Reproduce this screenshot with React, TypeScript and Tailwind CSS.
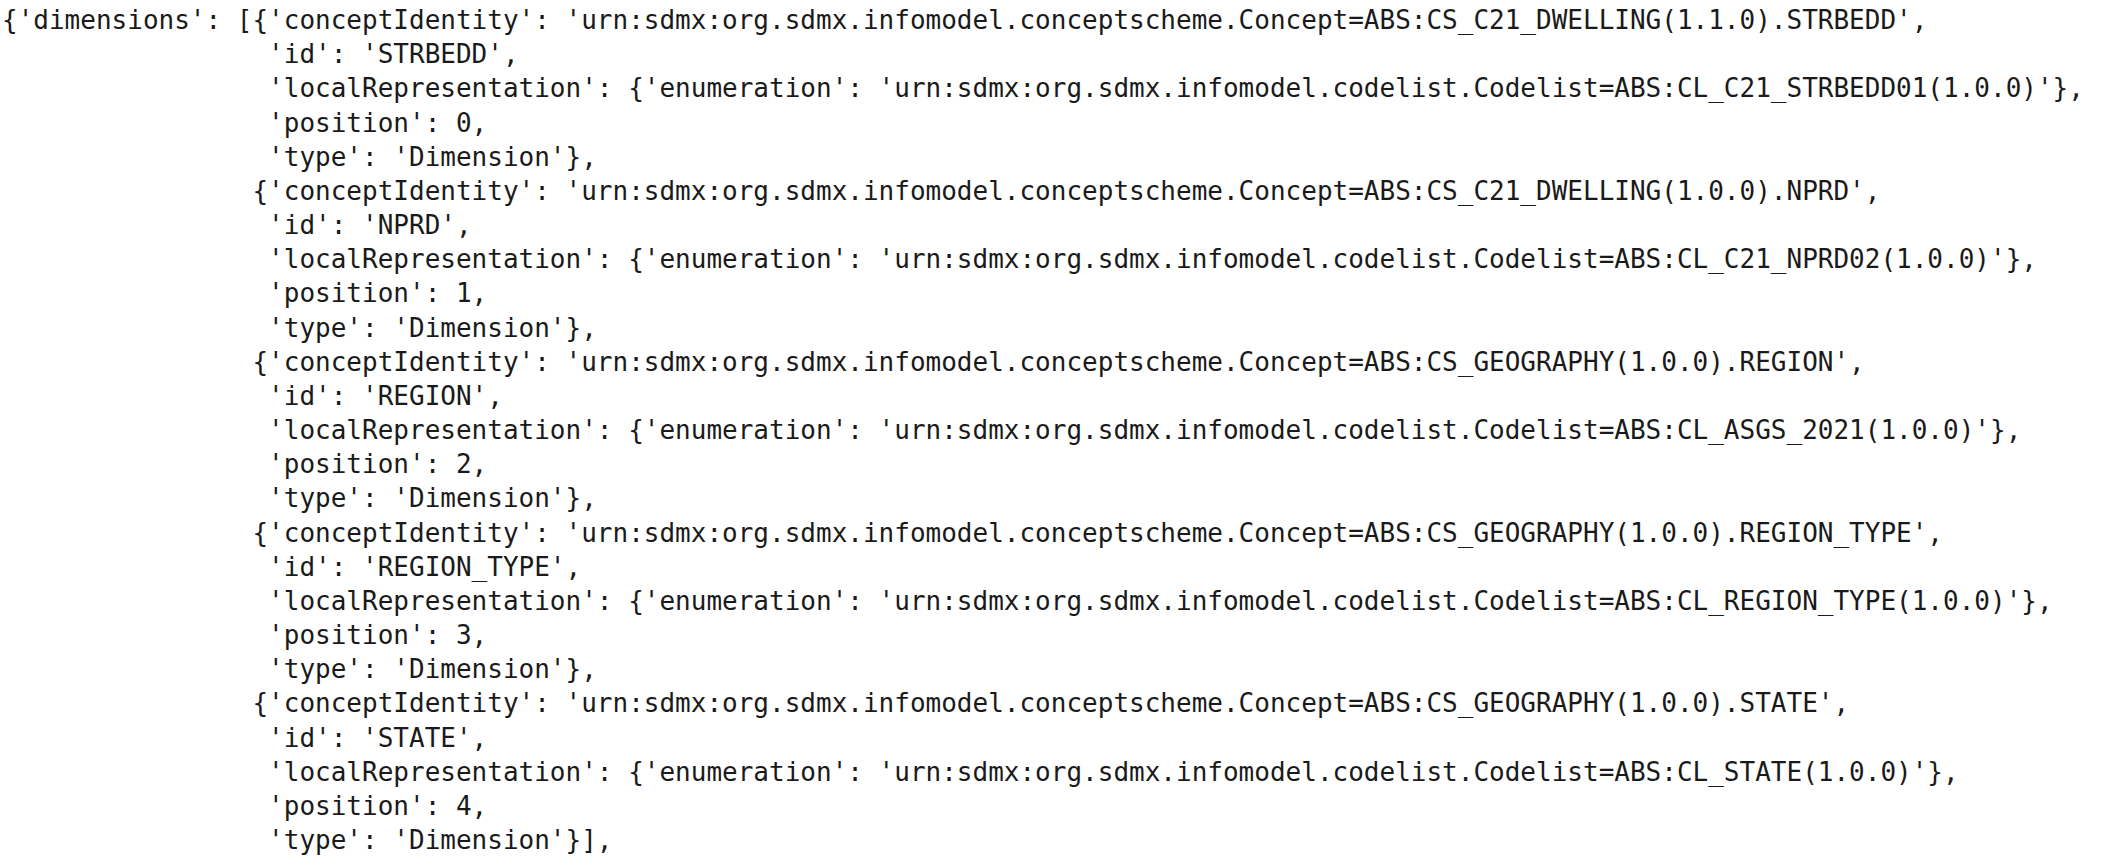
import React from "react";

const lines = [
  "{'dimensions': [{'conceptIdentity': 'urn:sdmx:org.sdmx.infomodel.conceptscheme.Concept=ABS:CS_C21_DWELLING(1.1.0).STRBEDD',",
  "                 'id': 'STRBEDD',",
  "                 'localRepresentation': {'enumeration': 'urn:sdmx:org.sdmx.infomodel.codelist.Codelist=ABS:CL_C21_STRBEDD01(1.0.0)'},",
  "                 'position': 0,",
  "                 'type': 'Dimension'},",
  "                {'conceptIdentity': 'urn:sdmx:org.sdmx.infomodel.conceptscheme.Concept=ABS:CS_C21_DWELLING(1.0.0).NPRD',",
  "                 'id': 'NPRD',",
  "                 'localRepresentation': {'enumeration': 'urn:sdmx:org.sdmx.infomodel.codelist.Codelist=ABS:CL_C21_NPRD02(1.0.0)'},",
  "                 'position': 1,",
  "                 'type': 'Dimension'},",
  "                {'conceptIdentity': 'urn:sdmx:org.sdmx.infomodel.conceptscheme.Concept=ABS:CS_GEOGRAPHY(1.0.0).REGION',",
  "                 'id': 'REGION',",
  "                 'localRepresentation': {'enumeration': 'urn:sdmx:org.sdmx.infomodel.codelist.Codelist=ABS:CL_ASGS_2021(1.0.0)'},",
  "                 'position': 2,",
  "                 'type': 'Dimension'},",
  "                {'conceptIdentity': 'urn:sdmx:org.sdmx.infomodel.conceptscheme.Concept=ABS:CS_GEOGRAPHY(1.0.0).REGION_TYPE',",
  "                 'id': 'REGION_TYPE',",
  "                 'localRepresentation': {'enumeration': 'urn:sdmx:org.sdmx.infomodel.codelist.Codelist=ABS:CL_REGION_TYPE(1.0.0)'},",
  "                 'position': 3,",
  "                 'type': 'Dimension'},",
  "                {'conceptIdentity': 'urn:sdmx:org.sdmx.infomodel.conceptscheme.Concept=ABS:CS_GEOGRAPHY(1.0.0).STATE',",
  "                 'id': 'STATE',",
  "                 'localRepresentation': {'enumeration': 'urn:sdmx:org.sdmx.infomodel.codelist.Codelist=ABS:CL_STATE(1.0.0)'},",
  "                 'position': 4,",
  "                 'type': 'Dimension'}],",
];

export default function App() {
  return (
    <div className="w-[2108px] h-[858px] overflow-hidden bg-white">
      <pre className="m-0 pl-[2px] pt-[3px] whitespace-pre text-[26px] leading-[34.17px] text-[#1a1a1a] font-['DejaVu_Sans_Mono',monospace]">
        {lines.join("\n")}
      </pre>
    </div>
  );
}
